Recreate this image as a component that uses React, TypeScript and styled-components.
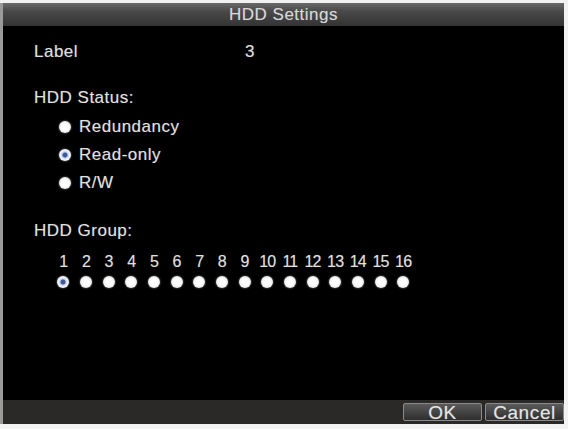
import styled, { createGlobalStyle } from "styled-components";

const GlobalStyle = createGlobalStyle`
  html, body {
    margin: 0;
    padding: 0;
    background: #ffffff;
  }
  body {
    font-family: "Liberation Sans", Arial, sans-serif;
  }
`;

const Screen = styled.div`
  width: 568px;
  height: 429px;
  box-sizing: border-box;
  padding: 3px 4px 5px 0;
  background: #f2f2f2;
`;

const Window = styled.div`
  height: 100%;
  display: flex;
  flex-direction: column;
  border-left: 3px solid #9a9a9a;
  background: #000;
`;

const TitleBar = styled.div`
  height: 23px;
  display: flex;
  align-items: center;
  justify-content: center;
  background: linear-gradient(#6a6a6a 0%, #4a4a4a 35%, #333 100%);
  color: #d8d8d8;
  font-size: 17px;
  letter-spacing: 0.5px;
  text-shadow: 0 0 1px rgba(255, 255, 255, 0.25);
`;

const Body = styled.div`
  flex: 1;
  padding: 16px 0 0 31px;
  color: #e0e0e0;
  font-size: 17px;
  letter-spacing: 0.5px;
  text-shadow: 0 0 1px rgba(255, 255, 255, 0.3);
`;

const FieldRow = styled.div`
  display: grid;
  grid-template-columns: 211px auto;
  height: 20px;
  line-height: 20px;
`;

const Heading = styled.div<{ $top: number }>`
  margin-top: ${(p) => p.$top}px;
  height: 20px;
  line-height: 20px;
`;

const RadioList = styled.div`
  display: flex;
  flex-direction: column;
  gap: 8px;
  margin: 9px 0 0 25px;
`;

const RadioRow = styled.div`
  display: flex;
  align-items: center;
  gap: 8px;
  height: 20px;
`;

const Dot = styled.span<{ $checked?: boolean }>`
  width: 12px;
  height: 12px;
  border-radius: 50%;
  flex: none;
  background: ${(p) =>
    p.$checked
      ? "radial-gradient(circle, #3c5a9a 0 2px, #c8d2ea 3px, #f4f6fb 5px)"
      : "radial-gradient(circle, #ffffff 0 3px, #ebebeb 6px)"};
  box-shadow: 0 0 2px rgba(255, 255, 255, 0.6);
`;

const GroupGrid = styled.div`
  display: grid;
  grid-template-columns: repeat(16, 22.67px);
  justify-items: center;
  margin: 13px 0 0 18px;
  row-gap: 6px;
`;

const Num = styled.div`
  font-size: 16px;
  height: 16px;
  line-height: 16px;
  letter-spacing: -0.8px;
`;

const Footer = styled.div`
  height: 24px;
  display: flex;
  justify-content: flex-end;
  align-items: center;
  gap: 3px;
  background: #2b2928;
`;

const Button = styled.div`
  width: 79px;
  height: 18px;
  box-sizing: border-box;
  border: 1px solid #8a8a8a;
  border-radius: 2px;
  background: linear-gradient(#5a5a5a, #2e2e2e);
  color: #e4e4e4;
  font-size: 19px;
  letter-spacing: 0.6px;
  line-height: 17px;
  text-align: center;
  text-shadow: 0 0 1px rgba(255, 255, 255, 0.3);
`;

const statuses = [
  { name: "Redundancy", checked: false },
  { name: "Read-only", checked: true },
  { name: "R/W", checked: false },
];

const groups = Array.from({ length: 16 }, (_, i) => i + 1);

export default function App() {
  return (
    <>
      <GlobalStyle />
      <Screen>
        <Window>
          <TitleBar>HDD Settings</TitleBar>
          <Body>
            <FieldRow>
              <span>Label</span>
              <span>3</span>
            </FieldRow>
            <Heading $top={26}>HDD Status:</Heading>
            <RadioList>
              {statuses.map((s) => (
                <RadioRow key={s.name}>
                  <Dot $checked={s.checked} />
                  <span>{s.name}</span>
                </RadioRow>
              ))}
            </RadioList>
            <Heading $top={28}>HDD Group:</Heading>
            <GroupGrid>
              {groups.map((g) => (
                <Num key={`n${g}`}>{g}</Num>
              ))}
              {groups.map((g) => (
                <Dot key={`d${g}`} $checked={g === 1} />
              ))}
            </GroupGrid>
          </Body>
          <Footer>
            <Button>OK</Button>
            <Button>Cancel</Button>
          </Footer>
        </Window>
      </Screen>
    </>
  );
}
